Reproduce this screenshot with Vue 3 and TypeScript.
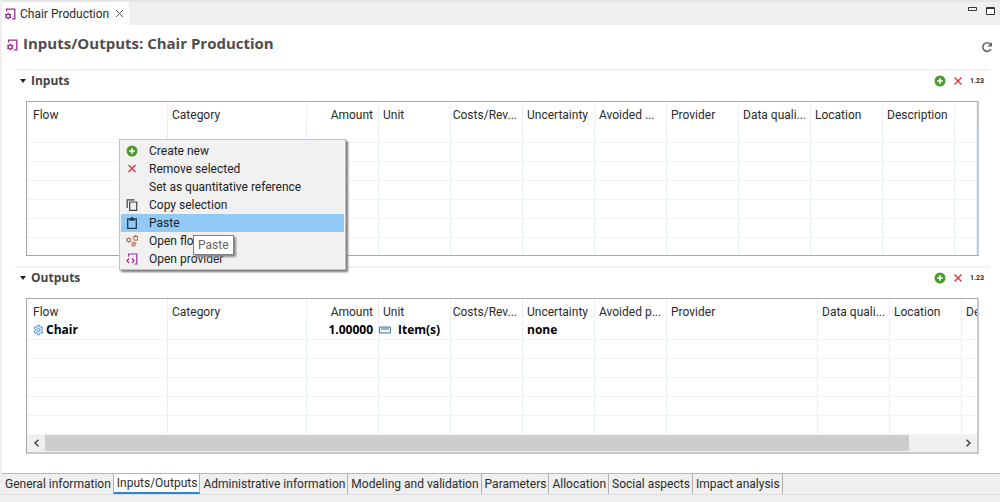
<script setup lang="ts">
import { ref } from 'vue'

interface Column {
  label: string
  size: string
  right?: boolean
}

const inputColumns: Column[] = [
  { label: 'Flow', size: 'flow' },
  { label: 'Category', size: 'category' },
  { label: 'Amount', size: 'std', right: true },
  { label: 'Unit', size: 'std' },
  { label: 'Costs/Rev...', size: 'std', right: true },
  { label: 'Uncertainty', size: 'std' },
  { label: 'Avoided ...', size: 'std' },
  { label: 'Provider', size: 'std' },
  { label: 'Data quali...', size: 'std' },
  { label: 'Location', size: 'std' },
  { label: 'Description', size: 'std' },
  { label: '', size: 'rest' },
]

const outputColumns: Column[] = [
  { label: 'Flow', size: 'flow' },
  { label: 'Category', size: 'category' },
  { label: 'Amount', size: 'std', right: true },
  { label: 'Unit', size: 'std' },
  { label: 'Costs/Rev...', size: 'std', right: true },
  { label: 'Uncertainty', size: 'std' },
  { label: 'Avoided p...', size: 'std' },
  { label: 'Provider', size: 'provider' },
  { label: 'Data quali...', size: 'std' },
  { label: 'Location', size: 'std' },
  { label: 'Description', size: 'std' },
]

const sections = [
  { title: 'Inputs', columns: inputColumns, filled: false, emptyRows: 7 },
  { title: 'Outputs', columns: outputColumns, filled: true, emptyRows: 5 },
]

const menuItems = [
  { label: 'Create new', icon: 'add' },
  { label: 'Remove selected', icon: 'remove' },
  { label: 'Set as quantitative reference', icon: '' },
  { label: 'Copy selection', icon: 'copy' },
  { label: 'Paste', icon: 'paste' },
  { label: 'Open flow', icon: 'flow' },
  { label: 'Open provider', icon: 'provider' },
]

const pages = [
  'General information',
  'Inputs/Outputs',
  'Administrative information',
  'Modeling and validation',
  'Parameters',
  'Allocation',
  'Social aspects',
  'Impact analysis',
]
const activePage = ref('Inputs/Outputs')
const activeItem = ref('Paste')
</script>

<template>
  <div class="editor">
    <header class="tabbar">
      <div class="file-tab">
        <svg class="process" viewBox="0 0 12 12" width="12" height="12">
          <path d="M2.600 3.600V1.200h8.200v9.600H8" fill="none" stroke="#9b2d9b" stroke-width="1.300" />
          <circle cx="4.200" cy="8" r="2" fill="none" stroke="#9b2d9b" stroke-width="1.400" />
          <path d="M4.200 4.800v1M4.200 10.200v1M1.300 6.300l1 .6M6.100 9.100l1 .6M1.300 9.700l1-.6M6.100 6.900l1-.6" stroke="#9b2d9b" stroke-width="1.300" />
        </svg>
        <span>Chair Production</span>
        <button class="icon-button" type="button" aria-label="Close">
          <svg viewBox="0 0 9 9" width="9" height="9"><path d="M1 1l7 7M8 1L1 8" stroke="#555" fill="none" /></svg>
        </button>
      </div>
      <div class="window-buttons">
        <button class="icon-button" type="button" aria-label="Minimize">
          <svg viewBox="0 0 9 10" width="9" height="10"><path d="M.5 1.500h8v3h-8z" fill="#fff" stroke="#333" /></svg>
        </button>
        <button class="icon-button" type="button" aria-label="Maximize">
          <svg viewBox="0 0 9 10" width="9" height="10"><path d="M.5 1.500h8v7h-8zM1 2.500h7" fill="#fff" stroke="#333" /></svg>
        </button>
      </div>
    </header>

    <main class="content">
      <div class="heading">
        <svg class="process" viewBox="0 0 12 12" width="12" height="12">
          <path d="M2.600 3.600V1.200h8.200v9.600H8" fill="none" stroke="#9b2d9b" stroke-width="1.300" />
          <circle cx="4.200" cy="8" r="2" fill="none" stroke="#9b2d9b" stroke-width="1.400" />
          <path d="M4.200 4.800v1M4.200 10.200v1M1.300 6.300l1 .6M6.100 9.100l1 .6M1.300 9.700l1-.6M6.100 6.900l1-.6" stroke="#9b2d9b" stroke-width="1.300" />
        </svg>
        <h1>Inputs/Outputs: Chair Production</h1>
        <button class="icon-button refresh" type="button" aria-label="Reload">
          <svg viewBox="0 0 12 12" width="12" height="12">
            <path d="M9.400 3.200A4.300 4.300 0 1 0 9.900 8.200" fill="none" stroke="#666" stroke-width="1.600" />
            <path d="M11 .9v4.500H6.500z" fill="#666" />
          </svg>
        </button>
      </div>

      <section v-for="section in sections" :key="section.title" class="section">
        <div class="section-bar">
          <button class="toggle" type="button">
            <svg viewBox="0 0 6 4" width="6" height="4"><path d="M0 0h6L3 4z" fill="#222" /></svg>
            <span>{{ section.title }}</span>
          </button>
          <div class="actions">
            <button class="icon-button" type="button" aria-label="Create new">
              <svg viewBox="0 0 12 12" width="12" height="12">
                <circle cx="6" cy="6" r="5.500" fill="#4d9a2e" />
                <path d="M6 3.200v5.600M3.200 6h5.600" stroke="#fff" stroke-width="1.600" />
              </svg>
            </button>
            <button class="icon-button" type="button" aria-label="Remove selected">
              <svg viewBox="0 0 12 12" width="12" height="12"><path d="M2.500 2.500l7 7M9.500 2.500l-7 7" stroke="#e2343f" stroke-width="1.400" /></svg>
            </button>
            <button class="icon-button number-format" type="button">1.23</button>
          </div>
        </div>

        <div class="grid-box" :class="{ scrolling: section.filled }">
          <div class="grid-view">
            <table>
              <colgroup>
                <col v-for="(column, i) in section.columns" :key="i" :class="column.size" />
              </colgroup>
              <thead>
                <tr>
                  <th v-for="(column, i) in section.columns" :key="i" :class="{ right: column.right }">{{ column.label }}</th>
                </tr>
              </thead>
              <tbody>
                <tr v-if="section.filled">
                  <td>
                    <span class="with-icon">
                      <svg viewBox="0 0 12 12" width="11" height="12">
                        <path d="M4.700 2.300L5 .8h2l.3 1.500 1 .6 1.500-.5 1 1.700-1.100 1v1.800l1.100 1-1 1.700-1.500-.5-1 .6-.3 1.500H5l-.3-1.500-1-.6-1.500.5-1-1.700 1.100-1V5.100l-1.100-1 1-1.700 1.500.5z" fill="#d9eafb" stroke="#3d8fe0" />
                        <circle cx="6" cy="6" r="1.600" fill="#fff" stroke="#3d8fe0" />
                      </svg>
                      Chair
                    </span>
                  </td>
                  <td></td>
                  <td class="right">1.00000</td>
                  <td class="unit">
                    <span class="with-icon">
                      <svg viewBox="0 0 12 8" width="12" height="8">
                        <path d="M.5 1h11v6H.5z" fill="#e9f5fa" stroke="#47788f" />
                        <path d="M3 1.500v2.500M5 1.500v2.500M7 1.500v2.500M9 1.500v2.500" stroke="#47788f" />
                      </svg>
                      Item(s)
                    </span>
                  </td>
                  <td></td>
                  <td>none</td>
                  <td v-for="n in 5" :key="n"></td>
                </tr>
                <tr v-for="row in section.emptyRows" :key="row">
                  <td v-for="(column, i) in section.columns" :key="i"></td>
                </tr>
              </tbody>
            </table>
          </div>
          <div v-if="section.filled" class="scrollbar">
            <button class="icon-button" type="button" aria-label="Scroll left">
              <svg viewBox="0 0 7 8" width="7" height="8"><path d="M5.500 .8L2 4l3.500 3.200" fill="none" stroke="#444" stroke-width="1.500" /></svg>
            </button>
            <div class="track"><div class="thumb"></div></div>
            <button class="icon-button" type="button" aria-label="Scroll right">
              <svg viewBox="0 0 7 8" width="7" height="8"><path d="M1.500 .8L5 4 1.500 7.200" fill="none" stroke="#444" stroke-width="1.500" /></svg>
            </button>
          </div>
        </div>
      </section>
    </main>

    <nav class="pages">
      <button
        v-for="page in pages"
        :key="page"
        type="button"
        :class="{ active: page === activePage }"
        @click="activePage = page"
      >{{ page }}</button>
    </nav>

    <div class="menu" role="menu">
      <button
        v-for="item in menuItems"
        :key="item.label"
        type="button"
        role="menuitem"
        :class="{ active: item.label === activeItem }"
        @mouseenter="activeItem = item.label"
      >
        <svg viewBox="0 0 12 12" width="12" height="12">
          <template v-if="item.icon === 'add'">
            <circle cx="6" cy="6" r="5.500" fill="#4d9a2e" />
            <path d="M6 3.200v5.600M3.200 6h5.600" stroke="#fff" stroke-width="1.600" />
          </template>
          <path v-else-if="item.icon === 'remove'" d="M2.500 2l7 7M9.500 2l-7 7" stroke="#e2343f" stroke-width="1.400" />
          <template v-else-if="item.icon === 'copy'">
            <path d="M1.200 9V.8h7.300" fill="none" stroke="#444" stroke-width="1.200" />
            <path d="M3.700 3h7v8.300h-7z" fill="none" stroke="#444" stroke-width="1.200" />
          </template>
          <template v-else-if="item.icon === 'paste'">
            <path d="M1.700 1.800h8.600v9.500H1.700z" fill="none" stroke="#24394b" stroke-width="1.300" />
            <path d="M3.500 1.200h1.300a1.200 1.200 0 0 1 2.400 0h1.300v2.600h-5z" fill="#24394b" />
          </template>
          <template v-else-if="item.icon === 'flow'">
            <g fill="none" stroke="#b36a4c">
              <circle cx="2.800" cy="5" r="1.700" stroke-width="1.100" />
              <path d="M2.800 2.200v1M2.800 6.800v1M.2 3.500l1 .6M4.400 5.900l1 .6M.2 6.500l1-.6M4.400 4.100l1-.6" />
              <path d="M7.700 1.500h3.800v3.700H8.200zM7 1.500h5M8.800 .5h1.700M6 8l3-.8 1 1.300-1.500 2.800-2.300-.3zM7 10l1.800-2" />
            </g>
          </template>
          <template v-else-if="item.icon === 'provider'">
            <path d="M2.500 3.500V1h8.300v10H8.500" fill="none" stroke="#9b2d9b" stroke-width="1.200" />
            <path d="M3 5.500L1 7.800 3 10M6 5.500l2 2.300L6 10" fill="none" stroke="#9b2d9b" stroke-width="1.200" />
          </template>
        </svg>
        <span>{{ item.label }}</span>
      </button>
      <div class="tooltip" role="tooltip">Paste</div>
    </div>
  </div>
</template>

<style>
body {
  margin: 0;
  background: #efefef;
}
</style>

<style scoped>
.editor {
  position: relative;
  box-sizing: border-box;
  min-height: 100vh;
  padding-left: 2px;
  background: #efefef;
  color: #2b2b2b;
  font-family: Roboto, "Open Sans", sans-serif;
  font-size: 12px;
  line-height: 18px;
}
button {
  margin: 0;
  padding: 0;
  border: 0;
  background: none;
  color: inherit;
  font: inherit;
}
svg {
  display: block;
  flex: none;
}
.icon-button {
  display: flex;
  align-items: center;
  justify-content: center;
}
.tabbar {
  display: flex;
  justify-content: space-between;
  height: 25px;
  box-sizing: border-box;
  border-top: 2px solid #e6e6e6;
}
.file-tab {
  display: flex;
  align-items: center;
  gap: 4px;
  padding: 0 5px 0 2px;
  background: #fff;
}
.file-tab .icon-button {
  margin-left: 2px;
}
.window-buttons {
  display: flex;
  align-items: flex-start;
  gap: 9px;
  padding: 4px 5px 0 0;
}
.content {
  padding-bottom: 19px;
  background: #fff;
}
.heading {
  display: flex;
  align-items: center;
  gap: 5px;
  height: 44px;
  box-sizing: border-box;
  padding: 0 7px 9px 4px;
}
.heading .process {
  margin-top: 4px;
}
h1 {
  margin: 0;
  color: #4d4d4d;
  font-family: "Open Sans", "Noto Sans", sans-serif;
  font-size: 15px;
  line-height: 20px;
  font-weight: 700;
}
.refresh {
  margin: 8px 0 0 auto;
}
.section {
  padding-right: 10px;
  padding-left: 13px;
}
.section + .section {
  margin-top: 10px;
}
.section-bar {
  display: flex;
  align-items: center;
  justify-content: space-between;
  height: 32px;
  box-sizing: border-box;
  padding: 0 6px 10px 5px;
  border-top: 2px solid #f2f2f2;
}
.toggle {
  display: flex;
  align-items: center;
  gap: 5px;
  color: #444;
  font-family: "Open Sans", "Noto Sans", sans-serif;
  font-weight: 700;
}
.actions {
  display: flex;
  align-items: center;
  gap: 6px;
}
.number-format {
  width: 14px;
  font-size: 7px;
  font-weight: 700;
}
.grid-box {
  height: 155px;
  box-sizing: border-box;
  margin-right: 11px;
  margin-left: 11px;
  overflow: hidden;
  border: 1px solid #a6a6ad;
  border-right: 2px solid #c6c6cd;
}
.grid-box.scrolling {
  height: auto;
  border-bottom: 2px solid #c6c6cd;
}
.grid-view {
  overflow: hidden;
}
table {
  width: 100%;
  border-collapse: separate;
  border-spacing: 0;
  table-layout: fixed;
}
.flow {
  width: 141px;
}
.category {
  width: 139px;
}
.std {
  width: 72px;
}
.provider {
  width: 151px;
}
col.rest {
  width: auto;
}
th,
td {
  box-sizing: border-box;
  height: 19px;
  padding: 0 5px 0 4px;
  overflow: hidden;
  border-right: 1px solid #e6eef7;
  border-bottom: 1px solid #f1f3f6;
  color: #000;
  font-family: "Open Sans", "Noto Sans", sans-serif;
  font-weight: 700;
  line-height: 18px;
  text-align: left;
  white-space: nowrap;
}
th {
  height: 22px;
  padding-top: 4px;
  border-right-color: #f0f0f0;
  border-bottom: 0;
  color: #2b2b2b;
  font-family: Roboto, "Open Sans", sans-serif;
  font-weight: 400;
}
th:first-child,
td:first-child {
  padding-left: 6px;
}
th.right,
td.right {
  padding-left: 0;
  text-align: right;
}
.with-icon {
  display: flex;
  align-items: center;
  gap: 2px;
}
td.unit {
  padding-left: 0;
}
.unit .with-icon {
  gap: 7px;
}
.scrollbar {
  display: flex;
  height: 16px;
  padding-bottom: 1px;
  background: #f0f0f0;
}
.scrollbar .icon-button {
  width: 18px;
}
.track {
  flex: 1;
}
.thumb {
  width: 94.5%;
  height: 100%;
  background: #cdcdcd;
}
.pages {
  display: flex;
  border-top: 1px solid #b8b8b8;
  border-bottom: 1px solid #dedede;
}
.pages button {
  height: 20px;
  box-sizing: border-box;
  padding: 0 2px 0 3px;
  border-right: 1px solid #b0b0b0;
}
.pages .active {
  border-bottom: 2px solid #2b88d0;
  background: #fff;
}
.menu {
  position: absolute;
  top: 139px;
  left: 119px;
  width: 227px;
  box-sizing: border-box;
  padding: 2px 1px 1px;
  border: 1px solid #c4c4c4;
  background: #f1f1f1;
  box-shadow: 2px 2px 2px #777;
  color: #222;
}
.menu button {
  display: flex;
  align-items: center;
  gap: 11px;
  width: 100%;
  height: 18px;
  padding-left: 5px;
  text-align: left;
}
.menu .active {
  background: #91c9f7;
}
.tooltip {
  position: absolute;
  top: 95px;
  left: 73px;
  padding: 0 4px;
  border: 1px solid #808080;
  background: #fff;
  box-shadow: 2px 2px 2px #888;
  color: #666;
}
</style>
